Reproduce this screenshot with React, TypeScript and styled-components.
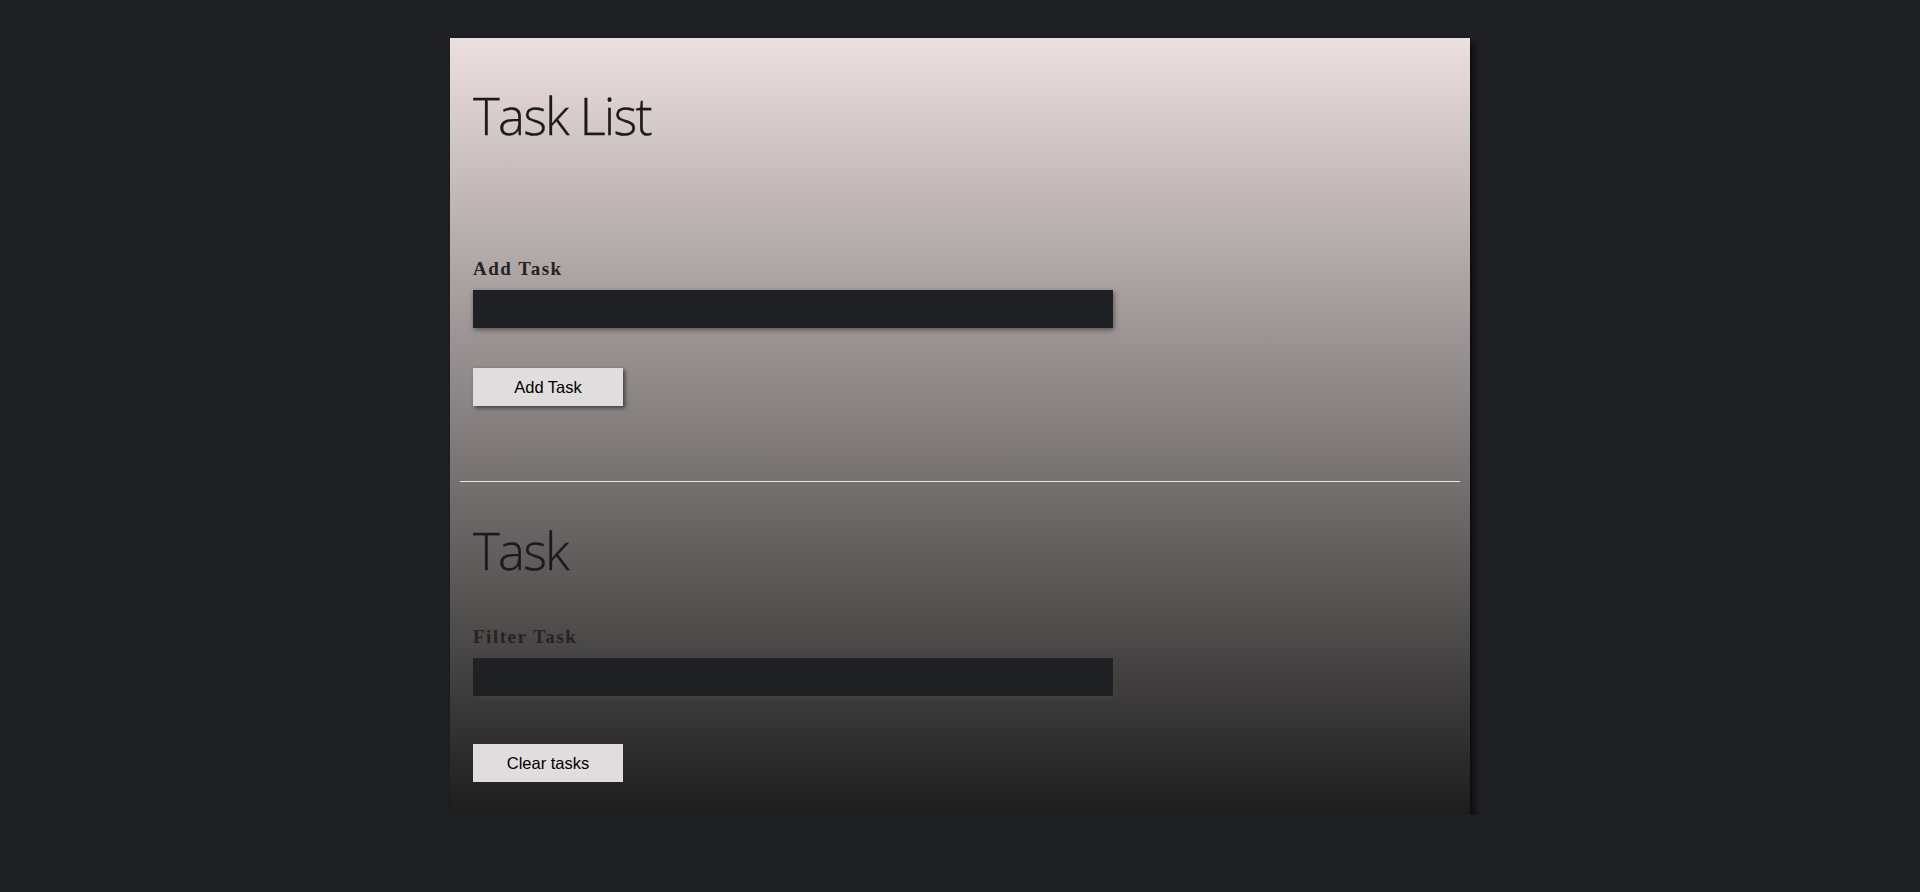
import React from "react";
import styled, { createGlobalStyle } from "styled-components";

const Global = createGlobalStyle`
  html, body { margin: 0; padding: 0; background: #202125; }
  body { font-family: "Open Sans", "Liberation Sans", sans-serif; }
  * { box-sizing: border-box; }
`;

const Card = styled.div`
  width: 1020px;
  margin: 38px auto 0;
  padding: 0 5px 33px;
  background: linear-gradient(to bottom, #ecdfdf 0%, #1d1d1d 100%);
  box-shadow: 4px 4px 8px rgba(0, 0, 0, 0.75);
`;

const Section = styled.section<{ $top: number }>`
  display: flex;
  flex-direction: column;
  align-items: flex-start;
  padding: ${(p) => p.$top}px 18px 0;
`;

const Title = styled.h1`
  margin: 0;
  font-family: "Open Sans", "Noto Sans", sans-serif;
  font-weight: 300;
  font-size: 51px;
  line-height: 60px;
  letter-spacing: -1.8px;
  color: #1c1a1a;
  -webkit-text-stroke: 0.3px #1c1a1a;
`;

const Label = styled.label<{ $top: number }>`
  margin-top: ${(p) => p.$top}px;
  font-family: "Liberation Serif", "Times New Roman", serif;
  font-weight: bold;
  font-size: 19px;
  line-height: 20px;
  letter-spacing: 1.5px;
  color: #272222;
`;

const Input = styled.input`
  margin-top: 11px;
  width: 640px;
  height: 38px;
  border: none;
  outline: none;
  background: #202125;
  color: #eee;
  padding: 0 10px;
  box-shadow: 1px 2px 5px rgba(70, 68, 68, 0.8);
`;

const Button = styled.button<{ $top: number; $shadow?: boolean }>`
  margin-top: ${(p) => p.$top}px;
  width: 150px;
  height: 38px;
  border: none;
  background: #e1dcdd;
  color: #000;
  font-family: "Liberation Sans", Arial, sans-serif;
  font-size: 16.5px;
  cursor: pointer;
  box-shadow: ${(p) => (p.$shadow ? "2px 2px 4px rgba(40,38,38,0.75)" : "none")};
`;

const Divider = styled.hr`
  margin: 75px 5px 0;
  border: none;
  height: 1px;
  background: #ece8e8;
`;

export default function App() {
  return (
    <>
      <Global />
      <Card>
        <Section $top={47}>
          <Title>Task List</Title>
          <Label $top={114}>Add Task</Label>
          <Input />
          <Button $top={40} $shadow>
            Add Task
          </Button>
        </Section>
        <Divider />
        <Section $top={38}>
          <Title as="h2">Task</Title>
          <Label $top={47}>Filter Task</Label>
          <Input />
          <Button $top={48}>Clear tasks</Button>
        </Section>
      </Card>
    </>
  );
}
